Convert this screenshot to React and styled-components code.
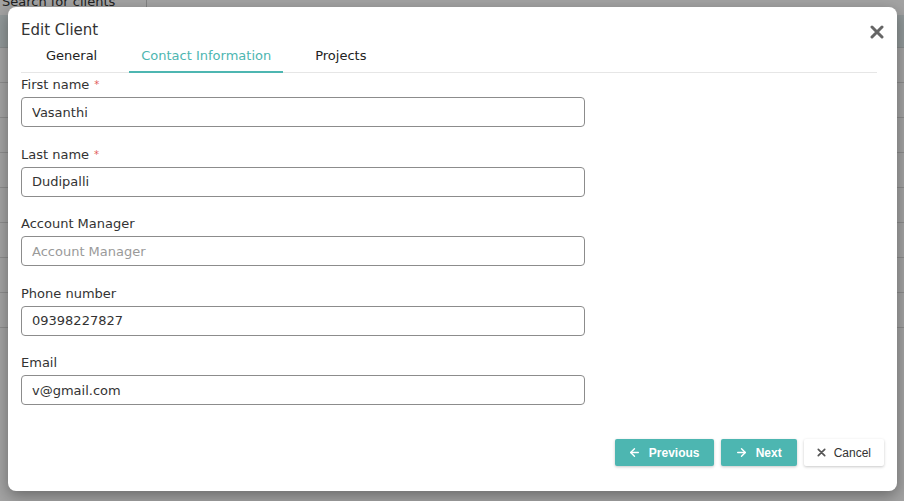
import React, { useState } from 'react';
import styled, { createGlobalStyle } from 'styled-components';
import { ArrowLeft, ArrowRight } from 'lucide-react';

const GlobalStyle = createGlobalStyle`
  html, body {
    margin: 0;
    padding: 0;
    overflow: hidden;
  }
  body {
    font-family: "DejaVu Sans", "Liberation Sans", sans-serif;
    color: #333;
  }
`;

const Page = styled.div`
  position: relative;
  width: 904px;
  height: 501px;
  background: #fff;
  overflow: hidden;
`;

const TopBar = styled.div`
  height: 15px;
  display: flex;
  align-items: flex-end;
`;

const SearchBox = styled.div`
  width: 147px;
  height: 15px;
  border-right: 1px solid #ccc;
  font-size: 13px;
  line-height: 4px;
  color: #333;
  overflow: hidden;
  padding-left: 2px;
  box-sizing: border-box;
`;

const TableHead = styled.div`
  height: 32px;
  background: #e3eef0;
  border-bottom: 1px solid #d5dcdd;
`;

const TableRow = styled.div`
  height: 35px;
  border-bottom: 1px solid #ddd;
  box-sizing: border-box;
`;

const Overlay = styled.div`
  position: absolute;
  inset: 0;
  background: rgba(0, 0, 0, 0.36);
`;

const Modal = styled.div`
  position: absolute;
  left: 8px;
  top: 7px;
  width: 889px;
  height: 484px;
  background: #fff;
  border-radius: 8px;
  box-shadow: 0 5px 15px rgba(0, 0, 0, 0.35);
  box-sizing: border-box;
  padding: 14px 20px 0 13px;
  display: flex;
  flex-direction: column;
`;

const Header = styled.div`
  display: flex;
  justify-content: space-between;
  align-items: center;
  height: 18px;
`;

const Title = styled.h2`
  margin: 0;
  font-size: 15px;
  font-weight: normal;
  line-height: 18px;
  color: #333;
`;

const CloseButton = styled.button`
  border: none;
  background: none;
  padding: 0;
  margin: 4px -7px 0 0;
  width: 14px;
  height: 14px;
  display: flex;
  cursor: pointer;
`;

const TabList = styled.div`
  display: flex;
  gap: 20px;
  padding-left: 13px;
  border-bottom: 1px solid #e6e6e6;
`;

const Tab = styled.button`
  border: none;
  background: none;
  font-family: inherit;
  font-size: 13px;
  line-height: 18px;
  padding: 8px 12px 6px;
  margin-bottom: -1px;
  color: ${p => (p.$active ? '#4db6b1' : '#222')};
  border-bottom: 2px solid ${p => (p.$active ? '#4db6b1' : 'transparent')};
  cursor: pointer;
`;

const Form = styled.div`
  padding-top: 4px;
  width: 564px;
`;

const Field = styled.div`
  margin-bottom: 19.5px;
`;

const Label = styled.label`
  display: block;
  font-size: 13px;
  line-height: 16px;
  margin-bottom: 4px;
  color: #333;
`;

const Required = styled.span`
  color: #e25b5b;
  font-size: 10px;
  margin-left: 5px;
  vertical-align: top;
`;

const Input = styled.input`
  display: block;
  width: 100%;
  height: 30px;
  box-sizing: border-box;
  border: 1px solid #8c8c8c;
  border-radius: 4px;
  padding: 0 10px;
  font-family: inherit;
  font-size: 13px;
  color: #333;
  outline: none;

  &::placeholder {
    color: #9a9a9a;
  }
`;

const Footer = styled.div`
  margin-top: auto;
  margin-right: -7px;
  margin-bottom: 25px;
  display: flex;
  justify-content: flex-end;
  gap: 7px;
`;

const Button = styled.button`
  height: 27px;
  min-width: ${p => p.$minWidth || 0}px;
  display: flex;
  align-items: center;
  justify-content: center;
  gap: 8px;
  padding: 0 ${p => (p.$light ? '13px' : '14px')} 0 13px;
  border: none;
  border-radius: 2px;
  font-family: "Liberation Sans", Arial, sans-serif;
  font-size: 12px;
  font-weight: ${p => (p.$light ? 'normal' : 'bold')};
  background: ${p => (p.$light ? '#fff' : '#4db6b1')};
  color: ${p => (p.$light ? '#333' : '#fff')};
  box-shadow: 0 1px 3px rgba(0, 0, 0, 0.22);
  cursor: pointer;
`;

const fields = [
  { label: 'First name', value: 'Vasanthi', required: true },
  { label: 'Last name', value: 'Dudipalli', required: true },
  { label: 'Account Manager', value: '', placeholder: 'Account Manager' },
  { label: 'Phone number', value: '09398227827' },
  { label: 'Email', value: 'v@gmail.com' },
];

const XIcon = ({ size, color, width }) => (
  <svg width={size} height={size} viewBox="0 0 14 14">
    <path d="M2 2 L12 12 M12 2 L2 12" stroke={color} strokeWidth={width} strokeLinecap="round" />
  </svg>
);

export default function App() {
  const [tab, setTab] = useState('contact');

  return (
    <Page>
      <GlobalStyle />
      <TopBar>
        <SearchBox>Search for clients</SearchBox>
      </TopBar>
      <TableHead />
      {Array.from({ length: 8 }).map((_, i) => (
        <TableRow key={i} />
      ))}
      <Overlay />
      <Modal>
        <Header>
          <Title>Edit Client</Title>
          <CloseButton aria-label="Close">
            <XIcon size={14} color="#666" width={3} />
          </CloseButton>
        </Header>
        <TabList>
          <Tab $active={tab === 'general'} onClick={() => setTab('general')}>General</Tab>
          <Tab $active={tab === 'contact'} onClick={() => setTab('contact')}>Contact Information</Tab>
          <Tab $active={tab === 'projects'} onClick={() => setTab('projects')}>Projects</Tab>
        </TabList>
        <Form>
          {fields.map(f => (
            <Field key={f.label}>
              <Label>
                {f.label}
                {f.required && <Required>*</Required>}
              </Label>
              <Input defaultValue={f.value} placeholder={f.placeholder} />
            </Field>
          ))}
        </Form>
        <Footer>
          <Button $minWidth={99}>
            <ArrowLeft size={13} strokeWidth={2.6} />
            Previous
          </Button>
          <Button $minWidth={76}>
            <ArrowRight size={13} strokeWidth={2.6} />
            Next
          </Button>
          <Button $light>
            <XIcon size={9} color="#555" width={2.6} />
            Cancel
          </Button>
        </Footer>
      </Modal>
    </Page>
  );
}
